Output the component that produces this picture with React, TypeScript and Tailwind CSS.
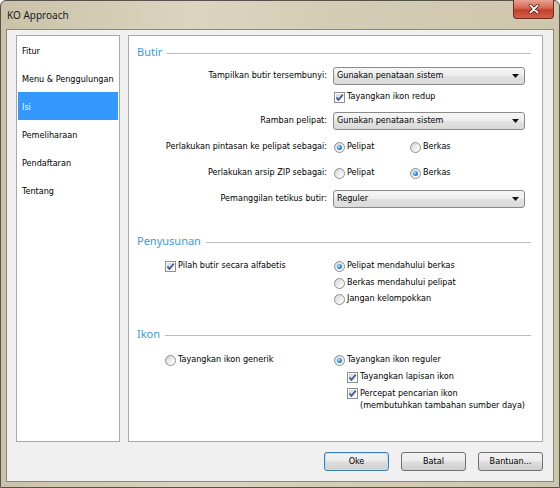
import React from "react";

const ui = "font-['DejaVu_Sans_Condensed','DejaVu_Sans',sans-serif] [font-stretch:condensed] text-[9px] text-black";
const heading = "font-['Noto_Sans',sans-serif] text-[11px] text-[#3a9ae8]";

const Checkbox = ({ checked = true }: { checked?: boolean }) => (
  <span className="relative flex h-[11px] w-[11px] shrink-0 border border-[#8e8f8f] bg-white p-px">
    <span className="h-full w-full bg-[linear-gradient(135deg,#d4d6d9_0%,#f4f4f4_70%,#ffffff_100%)]" />
    {checked && (
      <svg viewBox="0 0 11 11" className="absolute left-[-1px] top-[-1px] h-[11px] w-[11px]">
        <polyline points="2.4,5.4 4.4,7.9 8.8,2.6" fill="none" stroke="#3d5a9c" strokeWidth="1.7" />
      </svg>
    )}
  </span>
);

const Radio = ({ checked = false }: { checked?: boolean }) => (
  <span className="flex h-[11px] w-[11px] shrink-0 items-center justify-center rounded-full border border-[#8e8f8f] bg-[linear-gradient(135deg,#d0d2d5_0%,#f2f2f2_60%,#ffffff_100%)]">
    {checked && (
      <span className="h-[5px] w-[5px] rounded-full bg-[radial-gradient(circle_at_35%_35%,#aee0ff_0%,#2f86dc_55%,#1b4f9e_100%)]" />
    )}
  </span>
);

const Option = ({
  kind,
  checked,
  children,
  className = "",
}: {
  kind: "check" | "radio";
  checked?: boolean;
  children: React.ReactNode;
  className?: string;
}) => (
  <label className={`flex h-[14px] items-center gap-[2px] whitespace-nowrap ${className}`}>
    {kind === "check" ? <Checkbox checked={checked} /> : <Radio checked={checked} />}
    <span>{children}</span>
  </label>
);

const Select = ({ value }: { value: string }) => (
  <div className="flex h-[18px] w-[192px] items-center justify-between rounded-[3px] border border-[#8a8a8a] bg-[linear-gradient(to_bottom,#f6f6f6_0%,#ededed_50%,#e2e2e2_51%,#dadada_100%)] pl-[3px] pr-[5px]">
    <span>{value}</span>
    <svg viewBox="0 0 7 4" className="h-[4px] w-[7px]">
      <polygon points="0,0 7,0 3.5,4" fill="#111" />
    </svg>
  </div>
);

const SectionHeader = ({ title, className = "" }: { title: string; className?: string }) => (
  <div className={`flex h-[14px] items-center pl-[8px] pr-[11px] ${className}`}>
    <span className={heading}>{title}</span>
    <span className="ml-[5px] mt-[2px] h-px flex-1 bg-[#bcbcbc]" />
  </div>
);

const Row = ({ label, children, className = "" }: { label: string; children: React.ReactNode; className?: string }) => (
  <div className={`flex items-center ${className}`}>
    <span className="w-[198px] text-right">{label}</span>
    <div className="ml-[6px] flex items-center">{children}</div>
  </div>
);

const Button = ({ children, primary }: { children: React.ReactNode; primary?: boolean }) => (
  <button
    className={`flex h-[19px] w-[65px] items-center justify-center rounded-[3px] border bg-[linear-gradient(to_bottom,#f3f3f3_0%,#ebebeb_48%,#dddddd_52%,#d0d0d0_100%)] ${
      primary ? "border-[#3c7fb1] shadow-[inset_0_0_0_1px_#b6e4f7]" : "border-[#707070]"
    }`}
  >
    {children}
  </button>
);

const menu = ["Fitur", "Menu & Penggulungan", "Isi", "Pemeliharaan", "Pendaftaran", "Tentang"];

export default function App() {
  return (
    <div className={`h-[488px] w-[560px] overflow-hidden ${ui}`}>
      <div className="flex h-full w-full flex-col rounded-t-[6px] border border-[#55534b] bg-[linear-gradient(90deg,#cac3a9_0%,#dbd5c0_35%,#d4cdb5_60%,#cec7ad_100%)]">
        {/* title bar */}
        <div className="relative flex h-[28px] shrink-0 items-center pl-[6px]">
          <span className="font-['Noto_Sans',sans-serif] text-[10px] text-[#1b1b1b]">KO Approach</span>
          <div className="absolute right-[5px] top-[-1px] flex h-[19px] w-[41px] items-center justify-center rounded-b-[4px] border border-t-0 border-[#6d2c22] bg-[linear-gradient(to_bottom,#e8a190_0%,#d7664f_45%,#c6402b_55%,#d0614a_100%)]">
            <svg viewBox="0 0 12 11" className="h-[10px] w-[12px]">
              <path d="M2 1.5 L10 9.5 M10 1.5 L2 9.5" stroke="#4a1d14" strokeWidth="3.6" strokeLinecap="round" />
              <path d="M2 1.5 L10 9.5 M10 1.5 L2 9.5" stroke="#ffffff" strokeWidth="2" strokeLinecap="round" />
            </svg>
          </div>
        </div>

        {/* client area */}
        <div className="mx-[5px] mb-[5px] flex flex-1 flex-col border border-[#8d8876] bg-[#f0f0f0] pb-[10px] pl-[9px] pr-[10px] pt-[5px]">
          <div className="flex h-[407px] gap-[8px]">
            {/* sidebar */}
            <div className="w-[104px] shrink-0 border border-[#a8a8a8] bg-white px-px">
              {menu.map((item) => (
                <div
                  key={item}
                  className={`flex h-[28px] items-center whitespace-nowrap pl-[4px] pt-[3px] ${
                    item === "Isi" ? "bg-[#3399ff] text-white" : ""
                  }`}
                >
                  {item}
                </div>
              ))}
            </div>

            {/* settings */}
            <div className="flex-1 border border-[#a8a8a8] bg-white">
              <SectionHeader title="Butir" className="mt-[9px]" />
              <Row label="Tampilkan butir tersembunyi:" className="mt-[8px]">
                <Select value="Gunakan penataan sistem" />
              </Row>
              <div className="mt-[5px] pl-[205px]">
                <Option kind="check" checked>
                  Tayangkan ikon redup
                </Option>
              </div>
              <Row label="Ramban pelipat:" className="mt-[8px]">
                <Select value="Gunakan penataan sistem" />
              </Row>
              <Row label="Perlakukan pintasan ke pelipat sebagai:" className="mt-[10px]">
                <Option kind="radio" checked className="ml-px w-[76px]">
                  Pelipat
                </Option>
                <Option kind="radio">Berkas</Option>
              </Row>
              <Row label="Perlakukan arsip ZIP sebagai:" className="mt-[12px]">
                <Option kind="radio" className="ml-px w-[76px]">
                  Pelipat
                </Option>
                <Option kind="radio" checked>
                  Berkas
                </Option>
              </Row>
              <Row label="Pemanggilan tetikus butir:" className="mt-[10px]">
                <Select value="Reguler" />
              </Row>

              <SectionHeader title="Penyusunan" className="mt-[26px]" />
              <div className="mt-[11px] flex pl-[36px]">
                <div className="w-[169px]">
                  <Option kind="check" checked>
                    Pilah butir secara alfabetis
                  </Option>
                </div>
                <div className="flex flex-col">
                  <Option kind="radio" checked>
                    Pelipat mendahului berkas
                  </Option>
                  <Option kind="radio" className="mt-[3px]">
                    Berkas mendahului pelipat
                  </Option>
                  <Option kind="radio" className="mt-[2px]">
                    Jangan kelompokkan
                  </Option>
                </div>
              </div>

              <SectionHeader title="Ikon" className="mt-[21px]" />
              <div className="mt-[12px] flex pl-[36px]">
                <div className="w-[169px]">
                  <Option kind="radio">Tayangkan ikon generik</Option>
                </div>
                <div className="flex flex-col">
                  <Option kind="radio" checked>
                    Tayangkan ikon reguler
                  </Option>
                  <div className="mt-[3px] pl-[13px]">
                    <Option kind="check" checked>
                      Tayangkan lapisan ikon
                    </Option>
                  </div>
                  <div className="mt-[3px] flex gap-[2px] pl-[13px]">
                    <span className="mt-[1px]">
                      <Checkbox checked />
                    </span>
                    <span className="leading-[12px]">
                      Percepat pencarian ikon
                      <br />
                      (membutuhkan tambahan sumber daya)
                    </span>
                  </div>
                </div>
              </div>
            </div>
          </div>

          <div className="mt-[10px] flex justify-end gap-[12px]">
            <Button primary>Oke</Button>
            <Button>Batal</Button>
            <Button>Bantuan...</Button>
          </div>
        </div>
      </div>
    </div>
  );
}
